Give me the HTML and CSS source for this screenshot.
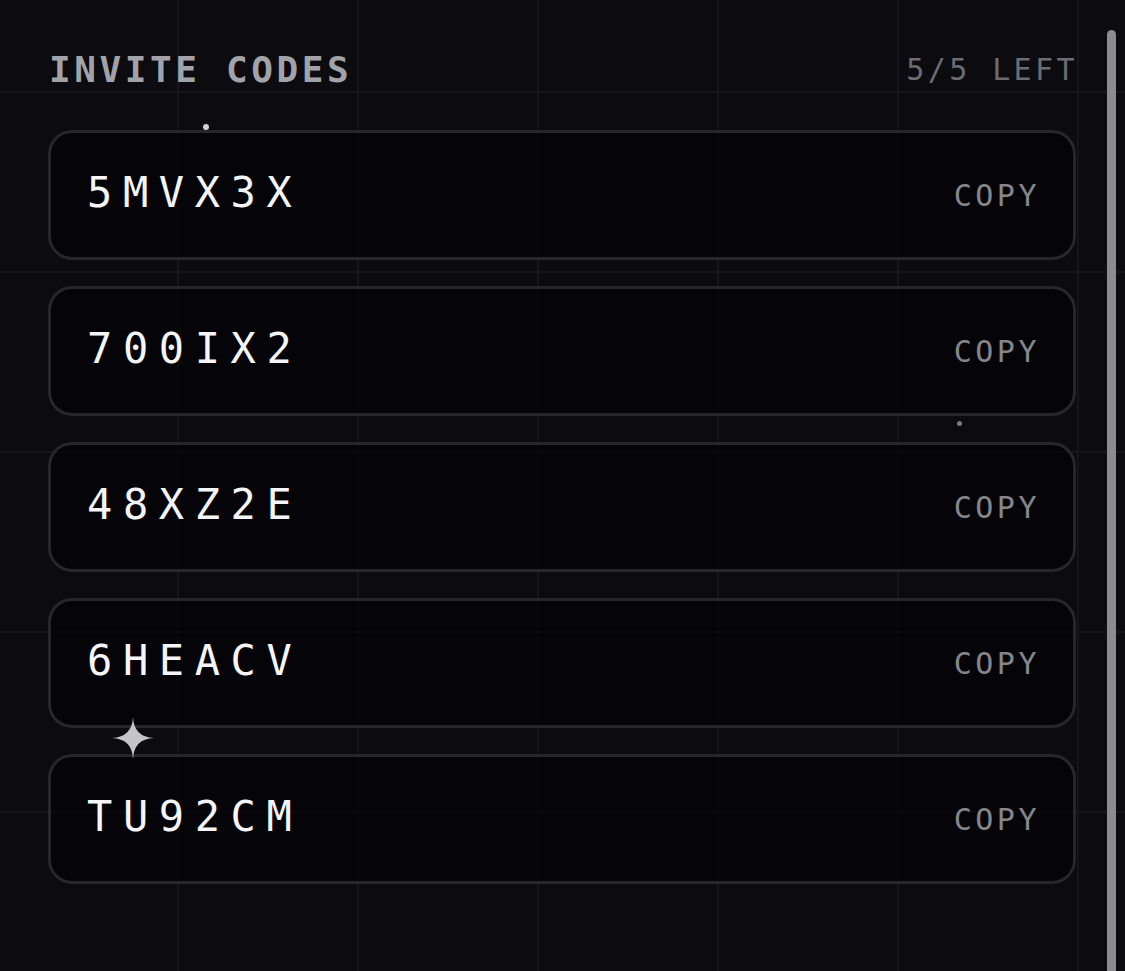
FILE: index.html
```html
<!DOCTYPE html>
<html>
<head>
<meta charset="utf-8">
<link rel="stylesheet" href="styles.css">
</head>
<body>
<div class="page">
  <div class="header">
    <span class="title">INVITE CODES</span>
    <span class="left">5/5 LEFT</span>
  </div>
  <div class="list">
    <div class="card"><span class="code">5MVX3X</span><span class="copy">COPY</span></div>
    <div class="card"><span class="code">700IX2</span><span class="copy">COPY</span></div>
    <div class="card"><span class="code">48XZ2E</span><span class="copy">COPY</span></div>
    <div class="card"><span class="code">6HEACV</span><span class="copy">COPY</span></div>
    <div class="card"><span class="code">TU92CM</span><span class="copy">COPY</span></div>
  </div>
  <span class="dot dot-a"></span>
  <span class="dot dot-b"></span>
  <svg class="sparkle" width="42" height="42" viewBox="0 0 42 42"><path d="M21 0 Q21.9 20.1 42 21 Q21.9 21.9 21 42 Q20.1 21.9 0 21 Q20.1 20.1 21 0Z" fill="#c4c4c9"/></svg>
  <div class="scrollbar"></div>
</div>
</body>
</html>
```
FILE: styles.css
```css
html, body {
  margin: 0;
  padding: 0;
  background: #0b0b10;
}
.page {
  position: relative;
  width: 1125px;
  height: 971px;
  overflow: hidden;
  box-sizing: border-box;
  padding: 49px 49px 0 48px;
  font-family: "DejaVu Sans Mono", "Liberation Mono", monospace;
  background-color: #0b0b10;
  background-image:
    linear-gradient(to right, #15151b 0, #15151b 2px, transparent 2px),
    linear-gradient(to bottom, #15151b 0, #15151b 2px, transparent 2px);
  background-size: 180px 180px;
  background-position: 177px 91px;
}
.header {
  display: flex;
  justify-content: space-between;
  align-items: center;
  padding-left: 1px;
}
.title {
  font-size: 36px;
  font-weight: bold;
  letter-spacing: 3.6px;
  color: #a2a2a9;
}
.left {
  font-size: 30px;
  letter-spacing: 3.4px;
  color: #6c6c72;
  margin-right: -2px;
}
.list {
  display: flex;
  flex-direction: column;
  gap: 26px;
  margin-top: 40px;
}
.card {
  height: 130px;
  box-sizing: border-box;
  border: 3px solid #26262c;
  border-radius: 24px;
  background: rgba(2, 2, 5, 0.62);
  display: flex;
  align-items: center;
  justify-content: space-between;
  padding: 0 33px 0 36px;
}
.code {
  font-size: 42px;
  letter-spacing: 10.6px;
  color: #f5f5f7;
  margin-bottom: 6px;
}
.copy {
  font-size: 30px;
  letter-spacing: 3.5px;
  color: #85858b;
}
.dot {
  position: absolute;
  border-radius: 50%;
}
.dot-a {
  left: 203px;
  top: 124px;
  width: 6px;
  height: 6px;
  background: #d2d2d6;
}
.dot-b {
  left: 957px;
  top: 421px;
  width: 5px;
  height: 5px;
  background: #7c7c82;
}
.sparkle {
  position: absolute;
  left: 112px;
  top: 717px;
}
.scrollbar {
  position: absolute;
  left: 1107px;
  top: 30px;
  width: 9px;
  height: 960px;
  border-radius: 5px 5px 0 0;
  background: #8c8c8e;
}
```
